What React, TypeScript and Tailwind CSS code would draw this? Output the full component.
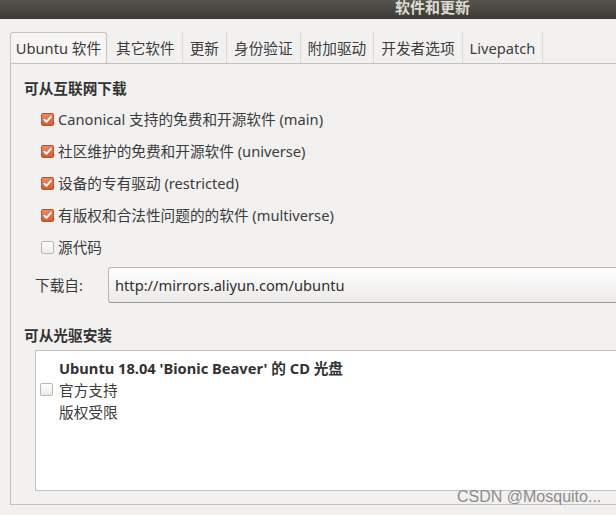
import React from "react";

function Check({ checked }: { checked: boolean }) {
  if (checked) {
    return (
      <span className="flex h-[13px] w-[13px] shrink-0 items-center justify-center rounded-[2px] border border-[#b5532c] bg-gradient-to-b from-[#f08a5d] to-[#d9582e]">
        <svg width="9" height="9" viewBox="0 0 9 9">
          <path d="M1.3 4.6 L3.5 6.8 L7.8 1.9" fill="none" stroke="#ffffff" strokeWidth="1.8" strokeLinecap="round" strokeLinejoin="round" />
        </svg>
      </span>
    );
  }
  return (
    <span className="block h-[13px] w-[13px] shrink-0 rounded-[2px] border border-[#bab8b4] bg-gradient-to-b from-[#fdfdfd] to-[#ececeb]" />
  );
}

const tabs = ["其它软件", "更新", "身份验证", "附加驱动", "开发者选项", "Livepatch"];

const sources: [boolean, string][] = [
  [true, "Canonical 支持的免费和开源软件 (main)"],
  [true, "社区维护的免费和开源软件 (universe)"],
  [true, "设备的专有驱动 (restricted)"],
  [true, "有版权和合法性问题的的软件 (multiverse)"],
  [false, "源代码"],
];

export default function App() {
  return (
    <div className="relative h-[515px] w-[616px] overflow-hidden bg-[#f2f1f0] font-['Noto_Sans','Noto_Sans_CJK_SC',sans-serif] text-[14.67px] text-[#3c3c3c]">
      {/* title bar */}
      <div className="h-[19px] bg-gradient-to-b from-[#57544e] to-[#3c3b37] pl-[395px]">
        <span className="block font-['Noto_Sans_CJK_SC',sans-serif] text-[15px] font-bold leading-[13px] text-[#dfdbd2]">
          软件和更新
        </span>
      </div>

      {/* tabs */}
      <div className="mt-[13px] flex h-[31px] pl-[10px]">
        <div className="mr-[2px] flex w-[97px] items-center justify-center rounded-t-[3px] border border-b-0 border-[#c6c4c1] bg-[#f6f5f4] text-[#3a3a3a]">
          Ubuntu 软件
        </div>
        {tabs.map((t) => (
          <div key={t} className="flex items-center border-r border-[#dbd9d6] px-[7px] pt-[1px]">
            {t}
          </div>
        ))}
      </div>

      {/* panel */}
      <div className="ml-[10px] h-[442px] w-[700px] border border-r-0 border-[#c4c2bf] pl-[13px] pt-[14px]">
        <div className="h-[20px] font-bold leading-[20px] text-[#333]">可从互联网下载</div>
        <div className="mt-[5px] pl-[17px]">
          {sources.map(([c, label]) => (
            <div key={label} className="flex h-[32px] items-center gap-[4px]">
              <Check checked={c} />
              <span className="leading-[20px]">{label}</span>
            </div>
          ))}
        </div>

        <div className="mt-[4px] flex items-center pl-[11px]">
          <span className="w-[73px]">下载自:</span>
          <div className="flex h-[36px] w-[600px] items-center rounded-[3px] border border-[#b8b6b2] border-b-[#9a9895] bg-gradient-to-b from-[#ffffff] to-[#ebeae8] pl-[6px] text-[#2f2f2f]">
            http://mirrors.aliyun.com/ubuntu
          </div>
        </div>

        <div className="mt-[22px] h-[20px] font-bold leading-[20px] text-[#333]">可从光驱安装</div>
        <div className="ml-[11px] mt-[5px] flex h-[141px] w-[650px] border border-[#c2c0bd] bg-white pt-[6px]">
          <div className="flex w-[23px] items-start pl-[4px] pt-[26px]">
            <Check checked={false} />
          </div>
          <div className="flex flex-col">
            <span className="h-[22px] font-bold leading-[22px] text-[#333]">
              Ubuntu 18.04 'Bionic Beaver' 的 CD 光盘
            </span>
            <span className="h-[22px] leading-[22px]">官方支持</span>
            <span className="h-[22px] leading-[22px]">版权受限</span>
          </div>
        </div>
      </div>

      <div className="absolute left-[457px] top-[487px] font-['Liberation_Sans',sans-serif] text-[16px] leading-[20px] text-[#8c8c8c]">
        CSDN @Mosquito...
      </div>
    </div>
  );
}
